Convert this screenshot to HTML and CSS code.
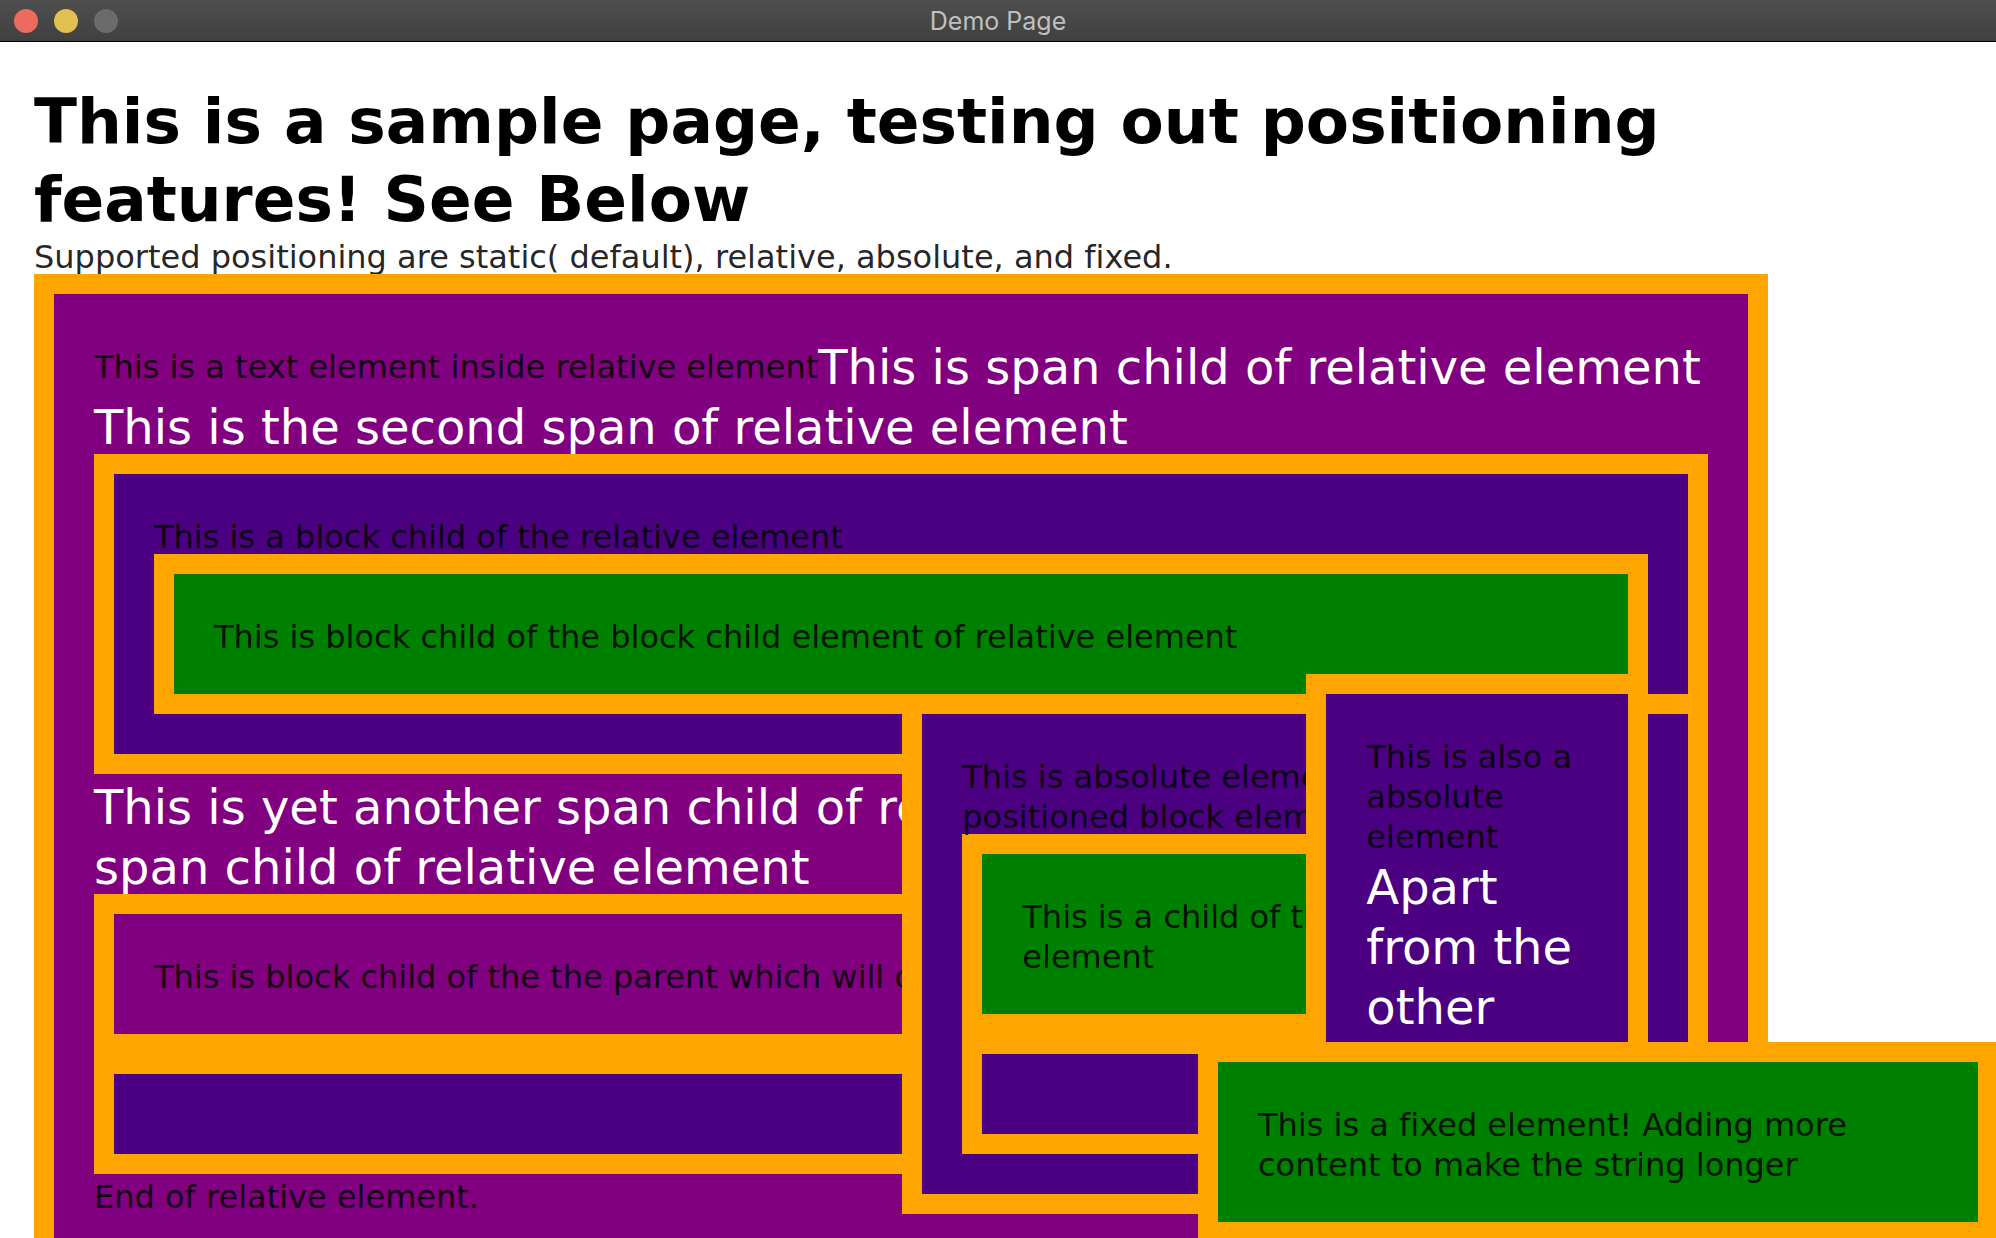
FILE: index.html
```html
<!DOCTYPE html>
<html lang="en">
<head>
<meta charset="utf-8">
<title>Demo Page</title>
<link rel="stylesheet" href="styles.css">
</head>
<body>
<header class="titlebar">
  <div class="controls">
    <button class="dot close" type="button" aria-label="Close"></button>
    <button class="dot minimize" type="button" aria-label="Minimize"></button>
    <button class="dot zoom" type="button" aria-label="Zoom" disabled></button>
  </div>
  <div class="title">Demo Page</div>
</header>
<main class="page">
  <h1 class="heading">This is a sample page, testing out positioning features! See Below</h1>
  <p class="text">Supported positioning are static( default), relative, absolute, and fixed.</p>
  <section class="box purple relative">
    <p class="spans"><span class="inline-text">This is a text element inside relative element</span>This is span child of relative element <span>This is the second span of relative element</span></p>
    <div class="box indigo">
      <p class="text">This is a block child of the relative element</p>
      <div class="box green">
        <p class="text">This is block child of the block child element of relative element</p>
      </div>
    </div>
    <p class="spans"><span>This is yet another span child of relative element.</span> <span>This is another span child of relative element</span></p>
    <div class="box purple">
      <p class="text">This is block child of the the parent which will overlap</p>
    </div>
    <div class="box indigo"></div>
    <p class="text">End of relative element.</p>
    <div class="box indigo absolute-first">
      <p class="text">This is absolute element in the relative positioned block element</p>
      <div class="box green">
        <p class="text">This is a child of the absolute block element</p>
      </div>
      <div class="box indigo"></div>
    </div>
    <div class="box indigo absolute-second">
      <p class="text">This is also a absolute element</p>
      <p class="spans">Apart from the other</p>
    </div>
  </section>
  <aside class="box green fixed">
    <p class="text">This is a fixed element! Adding more content to make the string longer</p>
  </aside>
</main>
</body>
</html>
```
FILE: styles.css
```css
* { box-sizing: border-box; }

body {
  margin: 0;
  height: 100vh;
  display: flex;
  flex-direction: column;
  overflow: hidden;
  background: #fff;
  color: #000;
  font-family: Verdana, "DejaVu Sans", sans-serif;
  font-variant-ligatures: none;
}

.titlebar {
  flex: none;
  display: grid;
  grid-template-columns: 1fr auto 1fr;
  align-items: center;
  height: 42px;
  padding: 0 14px;
  border-bottom: 1px solid #000;
  background: linear-gradient(#4e4e4e, #404040);
}

.controls { display: flex; gap: 16px; }

.dot {
  width: 24px;
  height: 24px;
  padding: 0;
  border: 0;
  border-radius: 50%;
}

.close { background: #ed6a5e; }
.minimize { background: #e0c04e; }
.zoom { background: #6b6b6b; }

.title {
  color: #c0c0c0;
  font: 25px/40px Inter, sans-serif;
}

.page {
  flex: 1;
  min-height: 0;
  padding: 36px 35px 0 34px;
  overflow: hidden;
}

.heading {
  margin: 5px 0 -5px;
  font-size: 63px;
  line-height: 78px;
}

.text {
  margin: 3px 0 -3px;
  color: rgba(0, 0, 0, 0.87);
  font-size: 32px;
  line-height: 40px;
}

.spans {
  margin: 3px 0 -3px;
  color: #fff;
  font-size: 48px;
  line-height: 60px;
}

.inline-text {
  color: rgba(0, 0, 0, 0.87);
  font-size: 32px;
  line-height: 40px;
  vertical-align: 6px;
}

.box {
  padding: 40px;
  border: 20px solid #ffa500;
}

.purple { background: #800080; }
.indigo { background: #4b0082; }
.green { background: #008000; }

.relative {
  position: relative;
  width: 90%;
}

.absolute-first {
  position: absolute;
  top: 400px;
  right: 40px;
  width: 806px;
}

.absolute-second {
  position: absolute;
  top: 380px;
  right: 100px;
  width: 342px;
}

.fixed {
  position: fixed;
  right: -2px;
  bottom: -4px;
  width: 800px;
}
```
